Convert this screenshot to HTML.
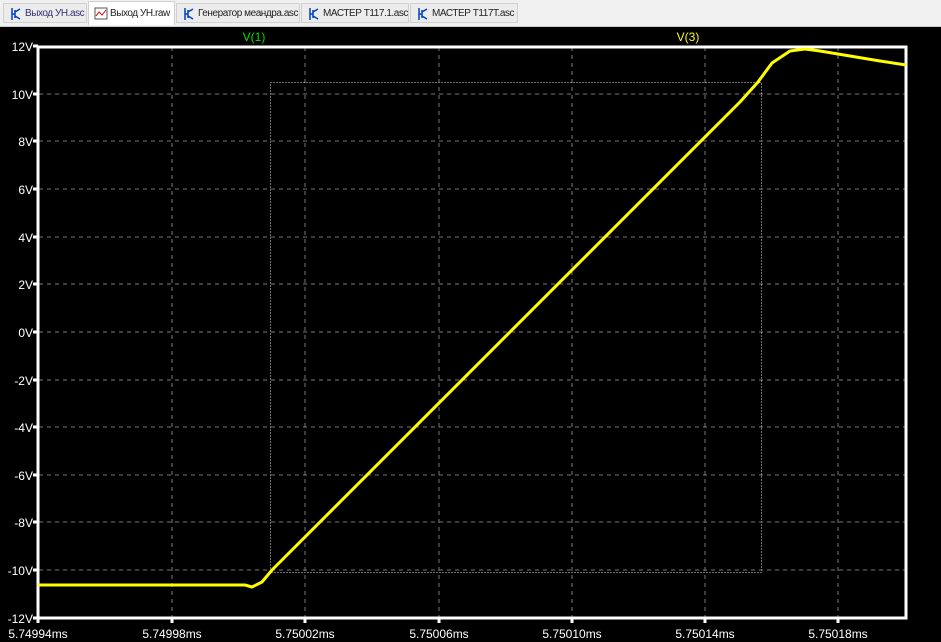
<!DOCTYPE html>
<html><head><meta charset="utf-8"><style>
body{margin:0;width:941px;height:642px;background:#000;overflow:hidden;font-family:"Liberation Sans",sans-serif}
.tabs{position:absolute;left:0;top:0;width:941px;height:26px;background:#f0f0f0;border-bottom:1px solid #ccc}
.tab{position:absolute;top:3px;height:20px;font-size:10px;color:#222;line-height:20px;border:1px solid #d0d0d0;background:#ececec;padding-left:21px;box-sizing:border-box;white-space:nowrap;overflow:hidden;letter-spacing:-0.45px}
.tab.act{background:#fff;top:1px;height:24px;border-bottom:none;line-height:24px}
.tab svg{position:absolute;left:5px;top:3px}
svg text{font-family:"Liberation Sans",sans-serif;font-size:12px;fill:#fff}
</style></head><body>
<div class="tabs">
<div class="tab" style="left:3px;width:84px"><svg width="14" height="14"><path d="M3 1v12M3 7h3M6 3v8M6 5l5-3M6 9l5 3" stroke="#0040c0" stroke-width="1.5" fill="none"/></svg><span style="color:#303070">Выход УН.asc</span></div>
<div class="tab act" style="left:88px;width:87px"><svg width="14" height="14" style="top:5px"><rect x="1" y="1" width="12" height="11" fill="#fff" stroke="#555"/><path d="M2 9l3-4 3 3 4-5" stroke="#d00" fill="none"/></svg>Выход УН.raw</div>
<div class="tab" style="left:176px;width:124px"><svg width="14" height="14"><path d="M3 1v12M3 7h3M6 3v8M6 5l5-3M6 9l5 3" stroke="#0040c0" stroke-width="1.5" fill="none"/></svg>Генератор меандра.asc</div>
<div class="tab" style="left:301px;width:108px"><svg width="14" height="14"><path d="M3 1v12M3 7h3M6 3v8M6 5l5-3M6 9l5 3" stroke="#0040c0" stroke-width="1.5" fill="none"/></svg>МАСТЕР Т117.1.asc</div>
<div class="tab" style="left:410px;width:108px"><svg width="14" height="14"><path d="M3 1v12M3 7h3M6 3v8M6 5l5-3M6 9l5 3" stroke="#0040c0" stroke-width="1.5" fill="none"/></svg>МАСТЕР Т117Т.asc</div>
</div>
<svg width="941" height="642" style="position:absolute;left:0;top:0" viewBox="0 0 941 642">
<rect x="0" y="27" width="941" height="615" fill="#000"/>
<g stroke="#777" stroke-dasharray="4,4" stroke-width="1">
<line x1="172" y1="47" x2="172" y2="617"/><line x1="305" y1="47" x2="305" y2="617"/><line x1="439" y1="47" x2="439" y2="617"/><line x1="572" y1="47" x2="572" y2="617"/><line x1="705" y1="47" x2="705" y2="617"/><line x1="838" y1="47" x2="838" y2="617"/>
<line x1="39" y1="94" x2="905" y2="94"/><line x1="39" y1="141" x2="905" y2="141"/><line x1="39" y1="189" x2="905" y2="189"/><line x1="39" y1="237" x2="905" y2="237"/><line x1="39" y1="284" x2="905" y2="284"/><line x1="39" y1="332" x2="905" y2="332"/><line x1="39" y1="380" x2="905" y2="380"/><line x1="39" y1="427" x2="905" y2="427"/><line x1="39" y1="475" x2="905" y2="475"/><line x1="39" y1="522" x2="905" y2="522"/><line x1="39" y1="570" x2="905" y2="570"/>
</g>
<rect x="270.5" y="82.5" width="491" height="490" fill="none" stroke="#ddd" stroke-dasharray="1,2"/>
<path d="M38 47H906V618H38Z" fill="none" stroke="#fff" stroke-width="3"/>
<g stroke="#fff" stroke-width="3">
<path d="M33 46h5M33 94h5M33 141h5M33 189h5M33 237h5M33 284h5M33 332h5M33 380h5M33 427h5M33 475h5M33 522h5M33 570h5M33 618h5"/>
<path d="M38 618v5M172 618v5M305 618v5M439 618v5M572 618v5M705 618v5M838 618v5"/>
</g>
<path d="M38 585H245L252 587L262 582L272 570L740 102L758 82L772 63L790 51L805 49L820 51L850 56L880 61L906 65" fill="none" stroke="#ffff00" stroke-width="3" stroke-linejoin="round"/>
<g text-anchor="end">
<text x="33" y="51">12V</text><text x="33" y="99">10V</text><text x="33" y="146">8V</text><text x="33" y="194">6V</text><text x="33" y="242">4V</text><text x="33" y="289">2V</text><text x="33" y="337">0V</text><text x="33" y="385">-2V</text><text x="33" y="432">-4V</text><text x="33" y="480">-6V</text><text x="33" y="527">-8V</text><text x="33" y="575">-10V</text><text x="33" y="623">-12V</text>
</g>
<g text-anchor="middle">
<text x="38" y="638">5.74994ms</text><text x="172" y="638">5.74998ms</text><text x="305" y="638">5.75002ms</text><text x="439" y="638">5.75006ms</text><text x="572" y="638">5.75010ms</text><text x="705" y="638">5.75014ms</text><text x="838" y="638">5.75018ms</text>
<text x="254" y="41" style="fill:#00e000">V(1)</text><text x="688" y="41" style="fill:#ffff00">V(3)</text>
</g>
</svg>
</body></html>
